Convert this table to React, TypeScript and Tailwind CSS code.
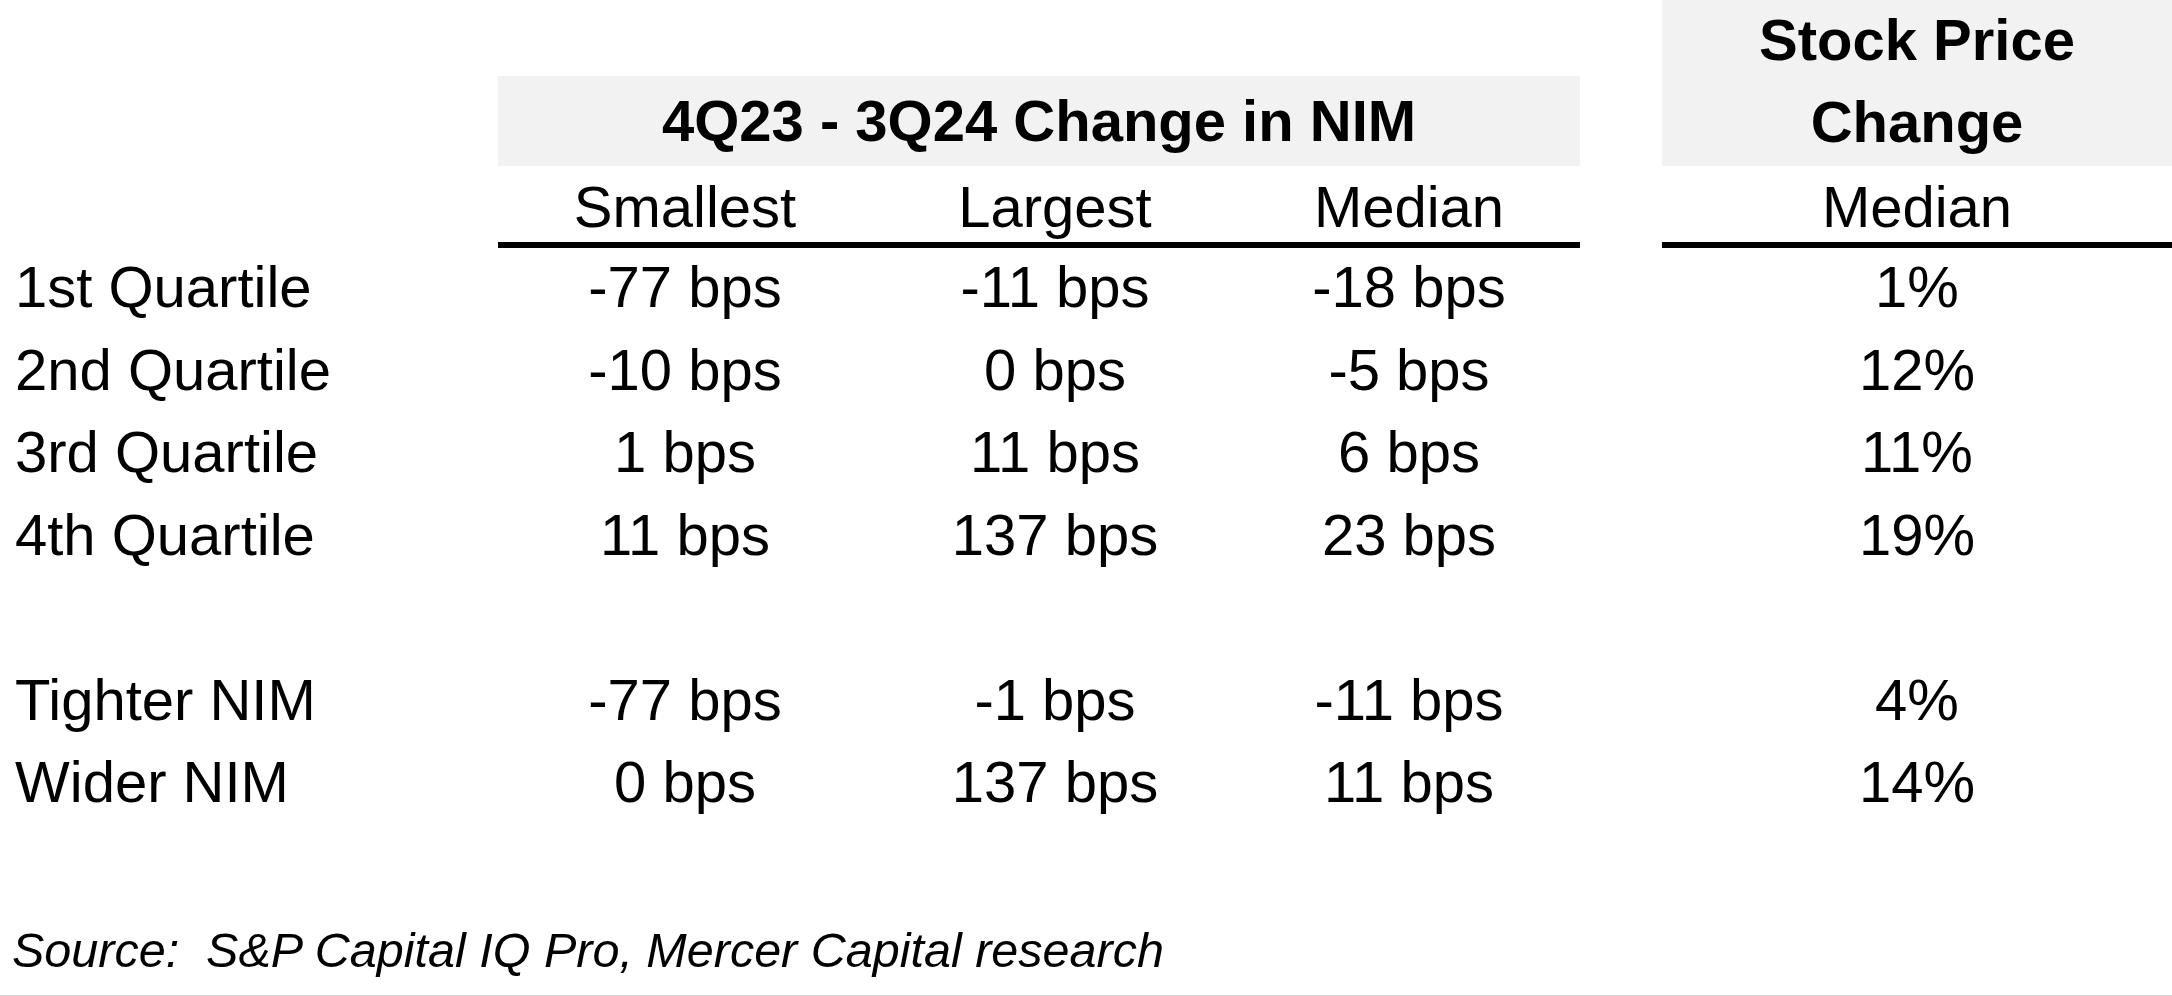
const rows: (string[] | null)[] = [
  ["1st Quartile", "-77 bps", "-11 bps", "-18 bps", "1%"],
  ["2nd Quartile", "-10 bps", "0 bps", "-5 bps", "12%"],
  ["3rd Quartile", "1 bps", "11 bps", "6 bps", "11%"],
  ["4th Quartile", "11 bps", "137 bps", "23 bps", "19%"],
  null,
  ["Tighter NIM", "-77 bps", "-1 bps", "-11 bps", "4%"],
  ["Wider NIM", "0 bps", "137 bps", "11 bps", "14%"],
];

const DataRow = ({ cells }: { cells: string[] | null }) => {
  if (!cells) return <div className="h-[82.5px]" />;
  const [label, smallest, largest, median, stock] = cells;
  return (
    <div className="flex h-[82.5px] leading-[82.5px]">
      <div className="w-[498px] pl-[15px]">{label}</div>
      <div className="w-[374px] text-center">{smallest}</div>
      <div className="w-[366px] text-center">{largest}</div>
      <div className="w-[342px] text-center">{median}</div>
      <div className="w-[82px]" />
      <div className="w-[510px] text-center">{stock}</div>
    </div>
  );
};

const App = () => {
  return (
    <div
      className="w-[2172px] h-[996px] box-border border-b border-[#d4d4d4] bg-white text-black text-[58px] overflow-hidden"
      style={{ fontFamily: '"Liberation Sans", Arial, sans-serif' }}
    >
      {/* header bands */}
      <div className="flex h-[166px]">
        <div className="w-[498px]" />
        <div className="w-[1082px] mt-[76px] h-[90px] bg-[#f2f2f2] text-center font-bold leading-[90px]">
          4Q23 - 3Q24 Change in NIM
        </div>
        <div className="w-[82px]" />
        <div className="w-[510px] h-[166px] bg-[#f2f2f2] text-center font-bold leading-[82px]">
          <div className="mt-[-1px]">
            Stock Price
            <br />
            Change
          </div>
        </div>
      </div>

      {/* column headings */}
      <div className="flex h-[82px]">
        <div className="w-[498px]" />
        <div className="w-[1082px] flex box-border border-b-[6px] border-black leading-[82px]">
          <div className="w-[374px] text-center">Smallest</div>
          <div className="w-[366px] text-center">Largest</div>
          <div className="w-[342px] text-center">Median</div>
        </div>
        <div className="w-[82px]" />
        <div className="w-[510px] box-border border-b-[6px] border-black text-center leading-[82px]">
          Median
        </div>
      </div>

      <div className="mt-[-2px]">
        {rows.map((r, i) => (
          <DataRow key={i} cells={r} />
        ))}
      </div>

      <div className="mt-[96px] pl-[12px] italic text-[48.5px] leading-[60px] whitespace-pre">
        Source:  S&amp;P Capital IQ Pro, Mercer Capital research
      </div>
    </div>
  );
};

export default App;
